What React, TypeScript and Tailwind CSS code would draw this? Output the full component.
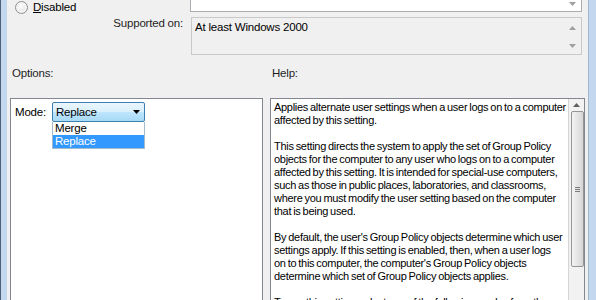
const helpLines = [
  'Applies alternate user settings when a user logs on to a computer',
  'affected by this setting.',
  '',
  'This setting directs the system to apply the set of Group Policy',
  'objects for the computer to any user who logs on to a computer',
  'affected by this setting. It is intended for special-use computers,',
  'such as those in public places, laboratories, and classrooms,',
  'where you must modify the user setting based on the computer',
  'that is being used.',
  '',
  "By default, the user's Group Policy objects determine which user",
  'settings apply. If this setting is enabled, then, when a user logs',
  "on to this computer, the computer's Group Policy objects",
  'determine which set of Group Policy objects applies.',
  '',
  'To use this setting, select one of the following modes from the',
];

function Arrow({ up, color = '#a0a0a0' }: { up?: boolean; color?: string }) {
  return (
    <svg width="7" height="4" viewBox="0 0 7 4" className="block">
      {up ? <path d="M0 4 L3.5 0 L7 4 Z" fill={color} /> : <path d="M0 0 L7 0 L3.5 4 Z" fill={color} />}
    </svg>
  );
}

export default function App() {
  return (
    <div className="w-[596px] h-[300px] overflow-hidden flex font-['Liberation_Sans',sans-serif] text-[11.5px] tracking-[-0.2px] leading-[13px] text-black">
      {/* window frame, left */}
      <div className="w-[7px] shrink-0 bg-[#c3d8ee] border-l border-[#4d5f73]" />

      <div className="flex-1 flex flex-col bg-[#f0f0f0]">
        {/* radio + description box (cut off at top) */}
        <div className="flex h-[12px]">
          <div className="w-[183px] flex items-center gap-[5px] pl-[8px] h-[14px]">
            <span className="w-[13px] h-[13px] rounded-full border border-[#8e8f8f] bg-[radial-gradient(circle_at_40%_35%,#ffffff,#d6d6d6)] shadow-[inset_0_0_0_2px_#f4f4f4]" />
            <span>
              <span className="underline">D</span>isabled
            </span>
          </div>
          <div className="w-[392px] h-[12px] bg-white border-x border-b border-[#abadb3] flex justify-end items-start pt-[2px] pr-[5px]">
            <Arrow />
          </div>
        </div>

        {/* supported on */}
        <div className="flex mt-[5px]">
          <div className="w-[176px] text-right text-[#1e1e1e]">Supported on:</div>
          <div className="ml-[8px] w-[391px] h-[38px] bg-[#f0f0f0] border border-[#c9c9c9] flex">
            <div className="flex-1 pl-[3px] pt-[3px]">At least Windows 2000</div>
            <div className="w-[17px] flex flex-col items-center justify-between pt-[8px] pb-[6px]">
              <Arrow up />
              <Arrow />
            </div>
          </div>
        </div>

        {/* labels */}
        <div className="flex mt-[12px] text-[#1e1e1e]">
          <div className="w-[265px] pl-[5px]">Options:</div>
          <div>Help:</div>
        </div>

        {/* panels */}
        <div className="flex mt-[18px] pl-[3px] gap-[7px]">
          <div className="w-[253px] h-[210px] bg-white border border-[#828790] flex items-start pt-[3px] pl-[4px]">
            <div className="w-[37px] h-[20px] leading-[20px]">Mode:</div>
            <div className="w-[93px] flex flex-col">
              <div className="h-[20px] flex items-center justify-between pl-[3px] pr-[4px] border border-[#3c7fb1] rounded-[2px] bg-[linear-gradient(to_bottom,#eaf6fd_0%,#d9f0fc_50%,#bee6fd_51%,#a7d9f5_100%)]">
                <span>Replace</span>
                <Arrow color="#000000" />
              </div>
              <div className="border border-[#a5bccf] border-t-0 bg-white">
                <div className="h-[13px] pl-[2px]">Merge</div>
                <div className="h-[13px] pl-[2px] bg-[#3399ff] text-white">Replace</div>
              </div>
            </div>
          </div>

          <div className="w-[315px] h-[210px] bg-white border border-[#828790] flex">
            <div className="flex-1 pl-[3px] pt-[2px] whitespace-nowrap overflow-hidden text-[11px] tracking-[-0.3px] [word-spacing:-0.7px]">
              {helpLines.map((l, i) => (
                <div key={i} className="h-[13px]">
                  {l}
                </div>
              ))}
            </div>
            <div className="w-[16px] bg-[#f2f2f2] border-l border-[#d4d4d4] flex flex-col items-center">
              <div className="h-[12px] flex items-center">
                <Arrow up color="#606060" />
              </div>
              <div className="w-[13px] h-[156px] ml-[1px] rounded-[2px] border border-[#959595] bg-[linear-gradient(to_right,#f4f4f4,#e6e6e6_45%,#d6d6d6)] flex flex-col items-center justify-center gap-[1px]">
                <div className="w-[5px] h-[1px] bg-[#7a7a7a]" />
                <div className="w-[5px] h-[1px] bg-[#7a7a7a]" />
                <div className="w-[5px] h-[1px] bg-[#7a7a7a]" />
              </div>
            </div>
          </div>
        </div>
      </div>

      {/* window frame, right */}
      <div className="w-[8px] shrink-0 bg-[#c3d8ee] border-l border-[#9fb6cf]" />
    </div>
  );
}
